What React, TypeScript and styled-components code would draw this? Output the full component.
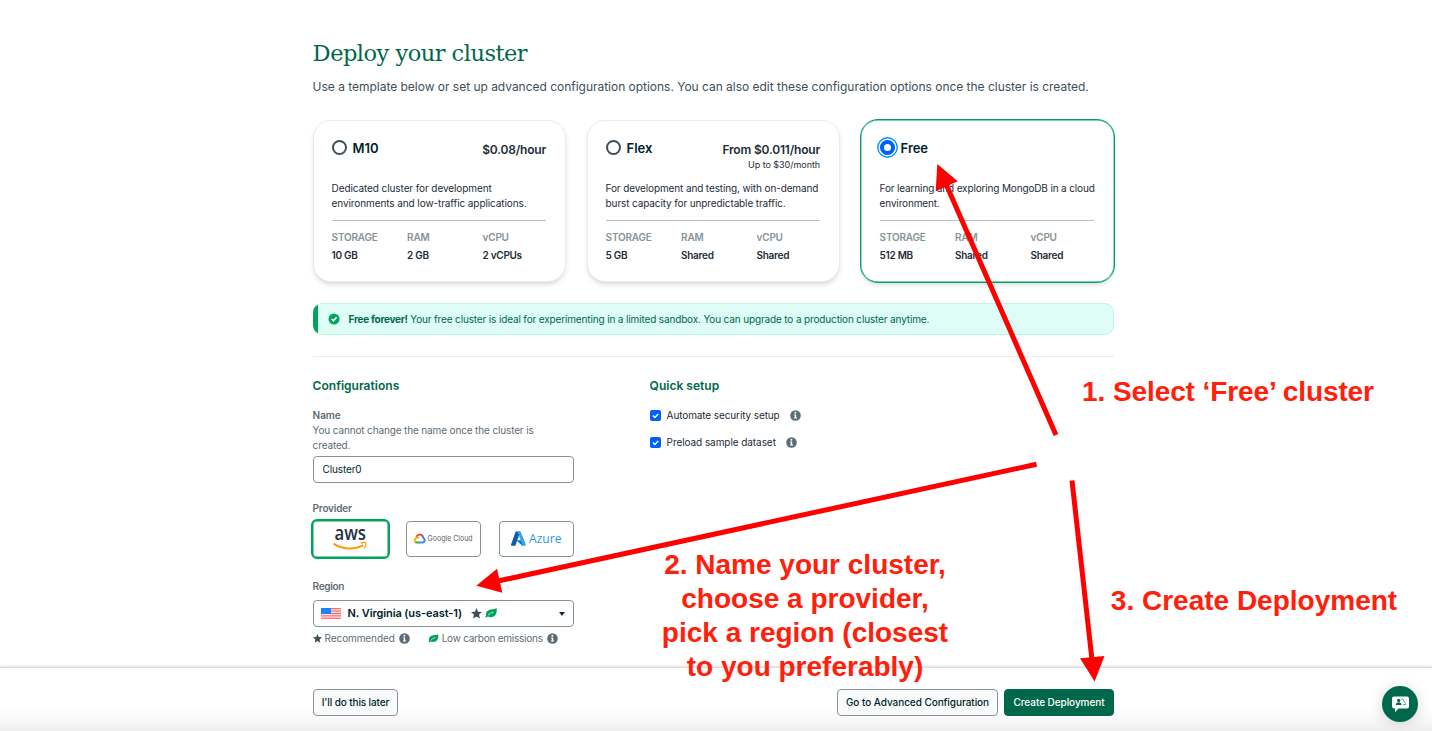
import React from 'react';
import styled, { createGlobalStyle, css } from 'styled-components';

const c = {
  ink: '#001e2b',
  body: '#1c2d38',
  slate: '#3d4f58',
  muted: '#5c6c75',
  faint: '#889397',
  line: '#e8edeb',
  green: '#00a35c',
  deep: '#00684a',
  blue: '#0160f8',
};

const Global = createGlobalStyle`
  * { box-sizing: border-box; }
  body { margin: 0; background: #fff; overflow: hidden; }
  h1, h2, p { margin: 0; }
  button, input { font: inherit; letter-spacing: inherit; }
`;

const Page = styled.div`
  position: relative;
  width: 1432px;
  height: 731px;
  font-family: Inter, sans-serif;
  font-size: 10px;
  line-height: 15px;
  letter-spacing: -0.13px;
  color: ${c.body};
  display: flex;
  flex-direction: column;
`;

const Main = styled.main`
  height: 667px;
  padding: 37px 0 0 312.6px;
`;

const Title = styled.h1`
  font: 400 22.5px/32px 'DejaVu Serif', serif;
  letter-spacing: -0.5px;
  color: ${c.deep};
`;

const Lead = styled.p`
  margin-top: 9px;
  font-size: 12px;
  line-height: 18px;
  letter-spacing: -0.021px;
  color: ${c.slate};
  white-space: nowrap;
`;

const Cards = styled.div`
  display: flex;
  gap: 21px;
  margin-top: 24px;
`;

const Card = styled.section<{ $selected?: boolean }>`
  width: 253px;
  height: 162px;
  padding: 18px 18.5px 0 18px;
  border: 1px solid ${c.line};
  border-radius: 18px;
  background: #fff;
  box-shadow: 0 3px 5px -1px rgba(0, 30, 43, 0.18);
  ${(p) =>
    p.$selected &&
    css`
      width: 255px;
      height: 164px;
      margin: -1px;
      padding: 19px 19.5px 0 19px;
      border: 1px solid ${c.green};
      box-shadow: inset 0 0 0 0.4px ${c.green}, 0 3px 4px -1px rgba(0, 30, 43, 0.14);
    `}
`;

const CardHead = styled.div`
  display: flex;
  height: 41px;
`;

const Radio = styled.span<{ $on?: boolean }>`
  flex: none;
  width: 15px;
  height: 15px;
  margin-top: 1px;
  border-radius: 50%;
  border: 2px solid ${c.slate};
  ${(p) =>
    p.$on &&
    css`
      border: 4.7px solid ${c.blue};
      box-shadow: 0 0 0 1.5px #fff, 0 0 0 2.9px #0498ec;
    `}
`;

const Tier = styled.h2`
  margin-left: 6px;
  font-size: 13px;
  font-weight: 600;
  line-height: 18px;
  letter-spacing: -0.05px;
  color: ${c.ink};
`;

const Price = styled.div`
  margin-left: auto;
  padding-top: 2px;
  text-align: right;
  font-size: 12px;
  font-weight: 600;
  line-height: 17px;
  letter-spacing: -0.19px;
`;

const Cap = styled.div`
  font-size: 9px;
  font-weight: 400;
  line-height: 13px;
  letter-spacing: -0.04px;
`;

const Blurb = styled.p<{ $track: number }>`
  height: 40px;
  padding: 1px 0 0;
  letter-spacing: ${(p) => p.$track}px;
  white-space: nowrap;
`;

const Specs = styled.div`
  display: grid;
  grid-template-columns: repeat(3, 1fr);
  column-gap: 12px;
  border-top: 1px solid #b8c4c2;
  padding-top: 9px;
`;

const SpecName = styled.div`
  font-weight: 600;
  letter-spacing: -0.22px;
  color: ${c.faint};
  margin-bottom: 3px;
`;

const SpecValue = styled.div`
  font-weight: 600;
  letter-spacing: -0.3px;
  white-space: nowrap;
`;

const Banner = styled.div`
  display: flex;
  align-items: center;
  width: 801px;
  height: 32px;
  margin-top: 21px;
  padding-left: 15px;
  border: 1px solid #b9f8e2;
  border-left: 0;
  border-radius: 9px;
  background: linear-gradient(90deg, ${c.green} 5px, #defdf7 5px);
  color: ${c.deep};
  letter-spacing: -0.145px;
  white-space: pre;
  svg { margin-right: 9px; }
  b { font-weight: 700; letter-spacing: -0.27px; }
`;

const Rule = styled.hr`
  width: 801px;
  height: 1px;
  margin: 21px 0 0;
  border: 0;
  background: ${c.line};
`;

const Columns = styled.div`
  display: flex;
  gap: 76px;
  padding-top: 20px;
`;

const Column = styled.div`
  width: 261px;
`;

const Heading = styled.h2`
  font-size: 12px;
  font-weight: 600;
  line-height: 18px;
  letter-spacing: 0.02px;
  color: ${c.deep};
`;

const Label = styled.div<{ $top: number; $track?: number }>`
  margin-top: ${(p) => p.$top}px;
  font-weight: 600;
  letter-spacing: ${(p) => p.$track ?? -0.2}px;
  color: ${c.muted};
`;

const Hint = styled.p`
  color: ${c.muted};
  letter-spacing: -0.14px;
`;

const Input = styled.input`
  display: block;
  width: 261px;
  height: 27px;
  margin-top: 3px;
  padding: 0 9px 1px;
  border: 1px solid ${c.faint};
  border-radius: 4px;
  color: ${c.ink};
  outline: none;
`;

const Providers = styled.div`
  display: flex;
  justify-content: space-between;
  margin-top: 5px;
`;

const Provider = styled.button<{ $selected?: boolean }>`
  width: 75px;
  height: 36px;
  padding: 0;
  border: 1px solid ${c.faint};
  border-radius: 4px;
  background: #fff;
  svg { display: block; }
  ${(p) =>
    p.$selected &&
    css`
      width: 79px;
      height: 40px;
      margin: -2px;
      border: 2px solid ${c.green};
      border-radius: 6px;
      box-shadow: inset 0 0 0 0.5px ${c.green};
    `}
`;

const Select = styled.button`
  display: flex;
  align-items: center;
  width: 261px;
  height: 27px;
  margin-top: 6px;
  padding: 0 8px 0 7px;
  border: 1px solid ${c.faint};
  border-radius: 4px;
  background: #fff;
  font-size: 11px;
  font-weight: 600;
  color: ${c.ink};
  letter-spacing: -0.093px;
`;

const Region = styled.span`
  margin: 0 9px 0 7px;
`;

const Caret = styled.span`
  margin-left: auto;
  border: 3px solid transparent;
  border-top: 4px solid ${c.body};
  border-bottom: 0;
`;

const Marks = styled.span`
  display: flex;
  align-items: center;
  gap: 3px;
`;

const Legend = styled.div`
  display: flex;
  align-items: center;
  height: 15px;
  margin-top: 4px;
  color: ${c.muted};
`;

const LegendText = styled.span<{ $track: number }>`
  margin: 0 4.5px 0 3px;
  letter-spacing: ${(p) => p.$track}px;
`;

const LegendGap = styled.span`
  width: 18px;
`;

const Option = styled.label<{ $top: number; $track: number }>`
  display: flex;
  align-items: center;
  height: 15px;
  margin-top: ${(p) => p.$top}px;
  letter-spacing: ${(p) => p.$track}px;
`;

const OptionText = styled.span`
  margin: 0 10.5px 0 6px;
`;

const Footer = styled.footer`
  position: relative;
  display: flex;
  align-items: flex-start;
  height: 64px;
  padding: 21px 318px 0 313px;
  border-top: 1px solid #dcdcdc;
  box-shadow: 0 -1px 2px rgba(0, 0, 0, 0.12);
  background: linear-gradient(#fff 0, #fff 60%, #fafafa 78%, #efefef 100%);
`;

const Action = styled.button<{ $width: number; $primary?: boolean; $track: number }>`
  width: ${(p) => p.$width}px;
  height: 27px;
  padding: 0;
  border: 1px solid ${(p) => (p.$primary ? c.deep : c.faint)};
  border-radius: 4px;
  background: ${(p) => (p.$primary ? c.deep : '#f9fbfa')};
  color: ${(p) => (p.$primary ? '#fff' : c.ink)};
  font-weight: 500;
  letter-spacing: ${(p) => p.$track}px;
  white-space: nowrap;
`;

const ActionGroup = styled.div`
  display: flex;
  gap: 6px;
  margin-left: auto;
`;

const Chat = styled.button`
  position: absolute;
  right: 14px;
  top: 18px;
  width: 36px;
  height: 36px;
  padding: 0;
  border: 0;
  border-radius: 50%;
  background: ${c.deep};
  box-shadow: 0 1px 14px rgba(0, 0, 0, 0.16);
  svg { display: block; }
`;

const Overlay = styled.svg`
  position: absolute;
  inset: 0;
  pointer-events: none;
`;

const Note = styled.div<{ $x: number; $y: number; $w: number; $track?: number }>`
  position: absolute;
  left: ${(p) => p.$x}px;
  top: ${(p) => p.$y}px;
  width: ${(p) => p.$w}px;
  text-align: center;
  white-space: pre;
  font: 700 28px/34px 'Liberation Sans', sans-serif;
  letter-spacing: ${(p) => p.$track ?? 0}px;
  color: #ff200c;
`;

const Info = () => (
  <svg width="11" height="11" viewBox="0 0 11 11">
    <circle cx="5.5" cy="5.5" r="5.3" fill={c.muted} />
    <circle cx="5.4" cy="2.7" r="1" fill="#fff" />
    <path d="M4 4.6h2.2v3h.8v1H4v-1h.8V5.6H4z" fill="#fff" />
  </svg>
);

const Check = () => (
  <svg width="11" height="11" viewBox="0 0 11 11">
    <rect width="11" height="11" rx="2" fill={c.blue} />
    <path d="M2.9 5.5l2 2 3.3-3.6" fill="none" stroke="#fff" strokeWidth="1.5" />
  </svg>
);

const Star = ({ size = 10 }: { size?: number }) => (
  <svg width={size} height={size} viewBox="0 0 10 10">
    <path d="M5 0l1.4 3.3 3.6.3-2.7 2.4.8 3.6L5 7.7 1.9 9.6l.8-3.6L0 3.6l3.6-.3z" fill={c.slate} />
  </svg>
);

const Leaf = ({ size = 10 }: { size?: number }) => (
  <svg width={size} height={size * 0.85} viewBox="0 0 12 10">
    <path d="M11.7.2C12.1 4 11 8 7.500 8.900 5.500 9.300 3.500 9 2.600 8.500L1.300 9.700.3 9l1-1.300C.2 5.600 1.500 2.900 4 1.800 6.500 1 10 1.300 11.700.2z" fill={c.green} />
    <path d="M3 7.200C4.700 5.500 6.300 4.500 8.500 4" fill="none" stroke="#fff" strokeWidth=".7" />
  </svg>
);

const Flag = () => (
  <svg width="20" height="11" viewBox="0 0 20 11">
    <rect width="20" height="11" fill="#fff" />
    {[0, 1.7, 3.4, 5.1, 6.8, 8.5, 10.2].map((y) => (
      <rect key={y} y={y} width="20" height="0.9" fill="#ff5c5c" />
    ))}
    <rect width="10" height="6" fill="#1a84ff" />
  </svg>
);

const Aws = () => (
  <svg width="75" height="36" viewBox="0 0 75 36">
    <text x="21.5" y="19" textLength="31.5" lengthAdjust="spacingAndGlyphs" fontFamily="Open Sans" fontWeight="600" fontSize="19" letterSpacing="0" fill="#252f3e">aws</text>
    <path d="M20.5 22.6c9 6 21 6.600 29.800 1.600" fill="none" stroke="#ff9900" strokeWidth="1.900" />
    <path d="M47.500 22.200c2.300-.9 4.700-1 5.400-.4.600.9-.3 3.600-1.800 5.200" fill="none" stroke="#ff9900" strokeWidth="1.200" />
  </svg>
);

const GoogleCloud = () => (
  <svg width="73" height="34" viewBox="0 0 73 34">
    <g fill="none" strokeWidth="2">
      <path d="M9.300 14.900a3.700 3.700 0 0 1 6.400-.8" stroke="#ea4335" />
      <path d="M15.200 13.700c.9.800 1.100 1.600 1.200 2.300a2.400 2.400 0 0 1-.5 4.500h-3.300" stroke="#4285f4" />
      <path d="M12.800 20.500H10a2.400 2.400 0 0 1-1.700-.7" stroke="#34a853" />
      <path d="M8.500 20a2.500 2.500 0 0 1 1.300-4.300c1-.1 1.600.2 2 .7" stroke="#fbbc05" />
    </g>
    <text x="20.600" y="19.400" textLength="45" lengthAdjust="spacingAndGlyphs" fontFamily="Inter" fontSize="7.500" letterSpacing="0" fill="#5f6368">Google Cloud</text>
  </svg>
);

const Azure = () => (
  <svg width="73" height="34" viewBox="0 0 73 34">
    <path d="M15.700 9.500h4.600l-4.900 14.200h-3.300c-.9 0-1.300-.7-1-1.500z" fill="#0f5ca8" />
    <path d="M16.300 18.300h6.200l1.200 5.200h-1.600z" fill="#0078d4" />
    <path d="M17.400 9.500h3.100l5.300 12.800c.3.800-.2 1.400-1 1.400h-3.600c.8 0 1.200-.6.900-1.400z" fill="#2fa5ee" />
    <text x="29" y="21.400" textLength="32.500" lengthAdjust="spacingAndGlyphs" fontFamily="Open Sans" fontSize="12.500" letterSpacing="0" fill="#2f9be2">Azure</text>
  </svg>
);

const Success = () => (
  <svg width="12" height="12" viewBox="0 0 12 12">
    <circle cx="6" cy="6" r="5.500" fill={c.green} />
    <path d="M3.600 6l1.800 1.800 3.200-3.500" fill="none" stroke="#fff" strokeWidth="1.500" />
  </svg>
);

const ChatIcon = () => (
  <svg width="36" height="36" viewBox="0 0 36 36">
    <path d="M12 10.500h13a2 2 0 0 1 2 2v8a2 2 0 0 1-2 2h-8.500L13 26.300v-3.800h-1a2 2 0 0 1-2-2v-8a2 2 0 0 1 2-2z" fill="#fff" />
    <circle cx="16.700" cy="14.400" r="1.700" fill={c.deep} />
    <path d="M13.800 19c0-2 1-2.800 2.900-2.800s2.800.8 2.800 2.800z" fill={c.deep} />
    <path d="M19.200 13.300c1.500-.6 2.700.2 2.300 1.500-.1.700.8 1.200 1.500 1.600.6.500.7 1.200.7 2.200h-3" fill="none" stroke={c.deep} strokeWidth=".6" />
  </svg>
);

type Plan = {
  name: string;
  price?: string;
  cap?: string;
  blurb: [string, string];
  track: number;
  specs: [string, string, string];
  selected?: boolean;
};

const plans: Plan[] = [
  { name: 'M10', price: '$0.08/hour', blurb: ['Dedicated cluster for development', 'environments and low-traffic applications.'], track: -0.095, specs: ['10 GB', '2 GB', '2 vCPUs'] },
  { name: 'Flex', price: 'From $0.011/hour', cap: 'Up to $30/month', blurb: ['For development and testing, with on-demand', 'burst capacity for unpredictable traffic.'], track: -0.12, specs: ['5 GB', 'Shared', 'Shared'] },
  { name: 'Free', blurb: ['For learning and exploring MongoDB in a cloud', 'environment.'], track: -0.15, specs: ['512 MB', 'Shared', 'Shared'], selected: true },
];

const specNames = ['STORAGE', 'RAM', 'vCPU'];

export default function App() {
  return (
    <Page>
      <Global />
      <Main>
        <Title>Deploy your cluster</Title>
        <Lead>Use a template below or set up advanced configuration options. You can also edit these configuration options once the cluster is created.</Lead>
        <Cards>
          {plans.map((p) => (
            <Card key={p.name} $selected={p.selected}>
              <CardHead>
                <Radio $on={p.selected} />
                <Tier>{p.name}</Tier>
                <Price>
                  {p.price}
                  {p.cap && <Cap>{p.cap}</Cap>}
                </Price>
              </CardHead>
              <Blurb $track={p.track}>
                {p.blurb[0]}
                <br />
                {p.blurb[1]}
              </Blurb>
              <Specs>
                {specNames.map((n, i) => (
                  <div key={n}>
                    <SpecName>{n}</SpecName>
                    <SpecValue>{p.specs[i]}</SpecValue>
                  </div>
                ))}
              </Specs>
            </Card>
          ))}
        </Cards>
        <Banner>
          <Success />
          <b>Free forever!</b>
          <span> Your free cluster is ideal for experimenting in a limited sandbox. You can upgrade to a production cluster anytime.</span>
        </Banner>
        <Rule />
        <Columns>
          <Column>
            <Heading>Configurations</Heading>
            <Label $top={13} $track={-0.06}>Name</Label>
            <Hint>You cannot change the name once the cluster is<br />created.</Hint>
            <Input defaultValue="Cluster0" />
            <Label $top={18}>Provider</Label>
            <Providers>
              <Provider $selected><Aws /></Provider>
              <Provider><GoogleCloud /></Provider>
              <Provider><Azure /></Provider>
            </Providers>
            <Label $top={22} $track={-0.3}>Region</Label>
            <Select>
              <Flag />
              <Region>N. Virginia (us-east-1)</Region>
              <Marks>
                <Star size={11} />
                <Leaf size={12} />
              </Marks>
              <Caret />
            </Select>
            <Legend>
              <Star size={9} />
              <LegendText $track={-0.1}>Recommended</LegendText>
              <Info />
              <LegendGap />
              <Leaf size={10.5} />
              <LegendText $track={-0.24}>Low carbon emissions</LegendText>
              <Info />
            </Legend>
            <Label $top={19}>Tag (optional)</Label>
          </Column>
          <Column>
            <Heading>Quick setup</Heading>
            <Option $top={13} $track={-0.11}>
              <Check />
              <OptionText>Automate security setup</OptionText>
              <Info />
            </Option>
            <Option $top={12} $track={-0.07}>
              <Check />
              <OptionText>Preload sample dataset</OptionText>
              <Info />
            </Option>
          </Column>
        </Columns>
      </Main>
      <Footer>
        <Action $width={85} $track={-0.12}>I'll do this later</Action>
        <ActionGroup>
          <Action $width={161} $track={-0.06}>Go to Advanced Configuration</Action>
          <Action $width={110} $track={-0.06} $primary>Create Deployment</Action>
        </ActionGroup>
        <Chat aria-label="Chat"><ChatIcon /></Chat>
      </Footer>
      <Overlay width="1432" height="731" viewBox="0 0 1432 731" fill="#f00" stroke="#f00" strokeWidth="5">
        <path d="M946 184L1056 435M499 580.800L1036.500 464.300M1091.800 658L1072 480.500" />
        <path stroke="none" d="M937.300 164L957.700 181.300 935.700 191.200zM476.300 585.800L497 568.800 502.300 592.700zM1094.600 681.500L1080 658.300 1104.500 656z" />
      </Overlay>
      <Note $x={1078} $y={375} $w={300} $track={-0.1}>1. Select ‘Free’ cluster</Note>
      <Note $x={655} $y={548} $w={300}>{'2. Name your cluster,\nchoose a provider,\npick a region (closest\nto you preferably)'}</Note>
      <Note $x={1104} $y={584} $w={300}>3. Create Deployment</Note>
    </Page>
  );
}
